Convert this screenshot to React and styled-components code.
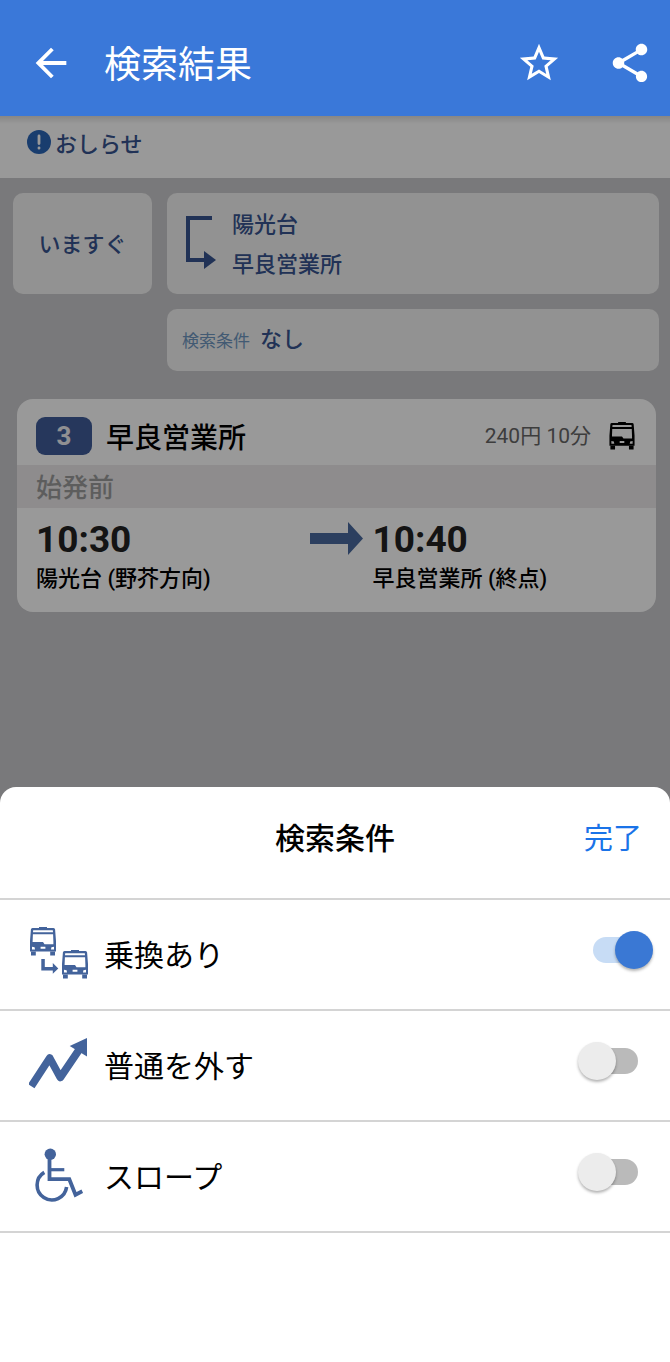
import React, { useState } from "react";
import styled, { createGlobalStyle } from "styled-components";
import { MdArrowBack, MdShare, MdStarBorder } from "react-icons/md";

const GlobalStyle = createGlobalStyle`
    * {
        box-sizing: border-box;
    }
    body {
        margin: 0;
        background: #79797b;
        color: #000;
        font-family: "Noto Sans CJK JP", sans-serif;
    }
    button {
        border: 0;
        padding: 0;
        background: none;
        color: inherit;
        font-family: inherit;
        cursor: pointer;
    }
`;

const latin = 'Roboto, "Noto Sans CJK JP", sans-serif';

const Screen = styled.div`
    min-height: 100vh;
    display: flex;
    flex-direction: column;
`;

const AppBar = styled.header`
    height: 116px;
    padding: 10px 17px 0 28px;
    display: flex;
    align-items: center;
    background: #3a78d9;
    color: #fff;
`;

const BarTitle = styled.h1`
    flex: 1;
    margin: 0 0 0 30px;
    padding-bottom: 2px;
    font-size: 37px;
    line-height: 48px;
    font-weight: 400;
`;

const BarButton = styled.button`
    display: flex;
    & + & {
        margin-left: 45px;
    }
    svg {
        width: 46px;
        height: 46px;
    }
`;

const Main = styled.main`
    flex: 1;
    position: relative;
    display: flex;
    flex-direction: column;
    background: #cacacd;
`;

const Scrim = styled.div`
    position: absolute;
    inset: 0;
    background: linear-gradient(rgba(0, 0, 0, 0.12), transparent 8px), rgba(0, 0, 0, 0.4);
`;

const Notice = styled.a`
    height: 62px;
    padding: 0 27px 11px;
    display: flex;
    align-items: center;
    gap: 4px;
    background: #fff;
    color: #37548f;
    font-size: 22px;
    line-height: 32px;
    font-weight: 500;
    text-decoration: none;
`;

const Search = styled.section`
    padding: 15px 11px 0 13px;
    display: grid;
    grid-template-columns: 139px 1fr;
    gap: 15px;
`;

const Box = styled.button`
    min-height: ${(props) => (props.$low ? 61 : 101)}px;
    grid-column: ${(props) => (props.$low ? 2 : "auto")};
    padding: 0 ${(props) => props.$pad || 0}px 3px;
    display: flex;
    align-items: ${(props) => (props.$low ? "baseline" : "center")};
    justify-content: ${(props) => (props.$pad ? "flex-start" : "center")};
    gap: ${(props) => (props.$low ? 10 : 16)}px;
    border-radius: 10px;
    background: #f3f3f3;
    color: #37548f;
    font-size: 22px;
    line-height: ${(props) => (props.$low ? 56 : 40)}px;
    font-weight: 500;
    text-align: left;
`;

const Stop = styled.span`
    display: block;
`;

const Hint = styled.span`
    color: #6e96c0;
    font-size: 17px;
    font-weight: 400;
`;

const Result = styled.article`
    margin: 28px 14px 60px 17px;
    border-radius: 16px;
    background: #fff;
    overflow: hidden;
`;

const ResultHead = styled.div`
    height: 66px;
    padding: 8px 21px 0 19px;
    display: flex;
    align-items: center;
`;

const RouteNo = styled.span`
    width: 56px;
    margin-right: 14px;
    border-radius: 9px;
    background: #405d9a;
    color: #f0f0f4;
    font-family: ${latin};
    font-size: 26px;
    line-height: 38px;
    font-weight: 700;
    text-align: center;
`;

const Destination = styled.h2`
    flex: 1;
    margin: 0;
    font-size: 28px;
    line-height: 40px;
    font-weight: 500;
`;

const Fare = styled.span`
    margin-right: 18px;
    color: #666;
    font-family: ${latin};
    font-size: 21px;
    line-height: 32px;
`;

const Status = styled.p`
    margin: 0;
    padding: 0 19px 2px;
    background: #edeaeb;
    color: #9c9c9c;
    font-size: 26px;
    line-height: 41px;
    font-weight: 500;
`;

const Trip = styled.div`
    padding: 10px 10px 16px 19px;
    display: grid;
    grid-template-columns: 1fr 63px 1fr;
    font-family: ${latin};
`;

const TripArrow = styled.div`
    padding-top: 4px;
`;

const Time = styled.div`
    color: #222;
    font-size: 37px;
    line-height: 44px;
    font-weight: 700;
`;

const Place = styled.div`
    font-size: 22px;
    line-height: 34px;
    font-weight: 500;
`;

const Sheet = styled.section`
    position: relative;
    margin-top: auto;
    padding-bottom: 129px;
    border-radius: 16px 16px 0 0;
    background: #fff;
`;

const SheetHead = styled.div`
    height: 113px;
    padding: 0 28px 13px;
    display: grid;
    grid-template-columns: 1fr auto 1fr;
    align-items: center;
    border-bottom: 2px solid #d4d4d4;
`;

const SheetTitle = styled.h2`
    grid-column: 2;
    margin: 0;
    font-size: 30px;
    line-height: 44px;
    font-weight: 500;
`;

const Done = styled.button`
    justify-self: end;
    && {
        color: #1a73e8;
    }
    font-size: 29px;
    line-height: 44px;
`;

const Option = styled.label`
    height: 111px;
    padding: 0 32px 3px 28px;
    display: flex;
    align-items: center;
    border-bottom: 2px solid #d4d4d4;
    cursor: pointer;
`;

const OptionIcon = styled.span`
    width: 62px;
    margin-right: 14px;
    display: flex;
    justify-content: center;
    color: #43639b;
`;

const OptionName = styled.span`
    flex: 1;
    font-size: 30px;
    line-height: 44px;
`;

const Switch = styled.input`
    appearance: none;
    width: 45px;
    height: 26px;
    margin: 0 0 7px;
    display: flex;
    align-items: center;
    border-radius: 13px;
    background: #bababa;
    cursor: pointer;

    &::before {
        content: "";
        flex: none;
        width: 38px;
        height: 38px;
        margin-left: -15px;
        border-radius: 50%;
        background: #ececec;
        box-shadow: 0 2px 3px rgba(0, 0, 0, 0.3);
    }
    &:checked {
        background: #c7dcf5;
    }
    &:checked::before {
        margin-left: 22px;
        background: #3a78d4;
    }
`;

const InfoIcon = () => (
    <svg width="24" height="24" viewBox="0 0 24 24">
        <circle cx="12" cy="12" r="12" fill="#2b66b8" />
        <path d="M12 6v7.500M12 17.800v.4" stroke="#fff" strokeWidth="2.800" strokeLinecap="round" />
    </svg>
);

const RouteIcon = () => (
    <svg width="30" height="53" viewBox="0 0 30 53">
        <path d="M26 2H2v42h17" fill="none" stroke="#37548f" strokeWidth="4" />
        <path d="M18 35 30 44 18 53z" fill="#37548f" />
    </svg>
);

const TripArrowIcon = () => (
    <svg width="53" height="33" viewBox="0 0 53 33">
        <path d="M0 11h38V0l15 16.500-15 16.500V22H0z" fill="#4a6a9e" />
    </svg>
);

// front view of a bus on a 26x29 grid, windows and lights are cut out
const BusShape = () => (
    <g fill="currentColor">
        <path
            fillRule="evenodd"
            d="M9 0h8v1h6.500q1.500 0 1.600 1.500L26 14v10.500H0V14L.9 2.500Q1 1 2.500 1H9z
               M3.200 3.200 3 5.200h20l-.2-2z
               M2.900 7.200 2.600 15h10.400l1.500 2.200h8.900V15l-.3-7.800z
               M2 19.800v2.700h3l-.4-2.200z
               M24 19.800v2.700h-3l.4-2.200z
               M10.600 19.800v2h4.800v-2z"
        />
        <path d="M1 24.500h4.800v4H1zM20.200 24.500H25v4h-4.800z" />
    </g>
);

const BusIcon = () => (
    <svg width="26" height="28" viewBox="0 0 26 29">
        <BusShape />
    </svg>
);

const TransferIcon = () => (
    <svg width="60" height="52" viewBox="0 0 60 52">
        <g transform="translate(1 0)">
            <BusShape />
        </g>
        <g transform="translate(33 23)">
            <BusShape />
        </g>
        <path d="M12.300 32h3.500v8h8v-4l5.500 5.600-5.500 5.200v-3.400H12.300z" fill="currentColor" />
    </svg>
);

const ZigzagIcon = () => (
    <svg width="60" height="52" viewBox="0 0 60 52">
        <path d="M2.300 48.300 20.700 20l10.600 19.500 20-29.500" fill="none" stroke="currentColor" strokeWidth="7.600" strokeLinejoin="round" />
        <path d="M58 0v18.500L40.700 8z" fill="currentColor" />
    </svg>
);

const WheelchairIcon = () => (
    <svg width="48" height="54" viewBox="0 0 48 54">
        <circle cx="15.300" cy="6.300" r="5.700" fill="currentColor" />
        <g fill="none" stroke="currentColor">
            <path d="M14.500 8v23.200h19.800l6.200 15.600 6.800-3.500" strokeWidth="3.800" />
            <path d="M14.500 21.700H29.300" strokeWidth="3.200" />
            <path d="M9.300 24.400A14.800 14.800 0 1 0 31.600 39" strokeWidth="3.600" />
        </g>
    </svg>
);

const options = [
    { id: "transfer", name: "乗換あり", Icon: TransferIcon },
    { id: "express", name: "普通を外す", Icon: ZigzagIcon },
    { id: "slope", name: "スロープ", Icon: WheelchairIcon },
];

const App = () => {
  const [checked, setChecked] = useState({ transfer: true, express: false, slope: false });

  const toggle = (id) => {
    setChecked({ ...checked, [id]: !checked[id] });
  };

  return (
    <Screen>
        <GlobalStyle />
        <AppBar>
            <BarButton aria-label="戻る"><MdArrowBack /></BarButton>
            <BarTitle>検索結果</BarTitle>
            <BarButton aria-label="お気に入り"><MdStarBorder /></BarButton>
            <BarButton aria-label="共有"><MdShare /></BarButton>
        </AppBar>
        <Main>
            <Notice href="#news"><InfoIcon />おしらせ</Notice>
            <Search>
                <Box>いますぐ</Box>
                <Box $pad={19}>
                    <RouteIcon />
                    <span>
                        <Stop>陽光台</Stop>
                        <Stop>早良営業所</Stop>
                    </span>
                </Box>
                <Box $low $pad={15}>
                    <Hint>検索条件</Hint>
                    <span>なし</span>
                </Box>
            </Search>
            <Result>
                <ResultHead>
                    <RouteNo>3</RouteNo>
                    <Destination>早良営業所</Destination>
                    <Fare>240円 10分</Fare>
                    <BusIcon />
                </ResultHead>
                <Status>始発前</Status>
                <Trip>
                    <div>
                        <Time>10:30</Time>
                        <Place>陽光台 (野芥方向)</Place>
                    </div>
                    <TripArrow><TripArrowIcon /></TripArrow>
                    <div>
                        <Time>10:40</Time>
                        <Place>早良営業所 (終点)</Place>
                    </div>
                </Trip>
            </Result>
            <Scrim />
            <Sheet>
                <SheetHead>
                    <SheetTitle>検索条件</SheetTitle>
                    <Done>完了</Done>
                </SheetHead>
                {options.map(({ id, name, Icon }) => (
                    <Option key={id} htmlFor={id}>
                        <OptionIcon><Icon /></OptionIcon>
                        <OptionName>{name}</OptionName>
                        <Switch
                            type="checkbox"
                            id={id}
                            checked={checked[id]}
                            onChange={() => toggle(id)}
                        />
                    </Option>
                ))}
            </Sheet>
        </Main>
    </Screen>
  );
}

export default App;
